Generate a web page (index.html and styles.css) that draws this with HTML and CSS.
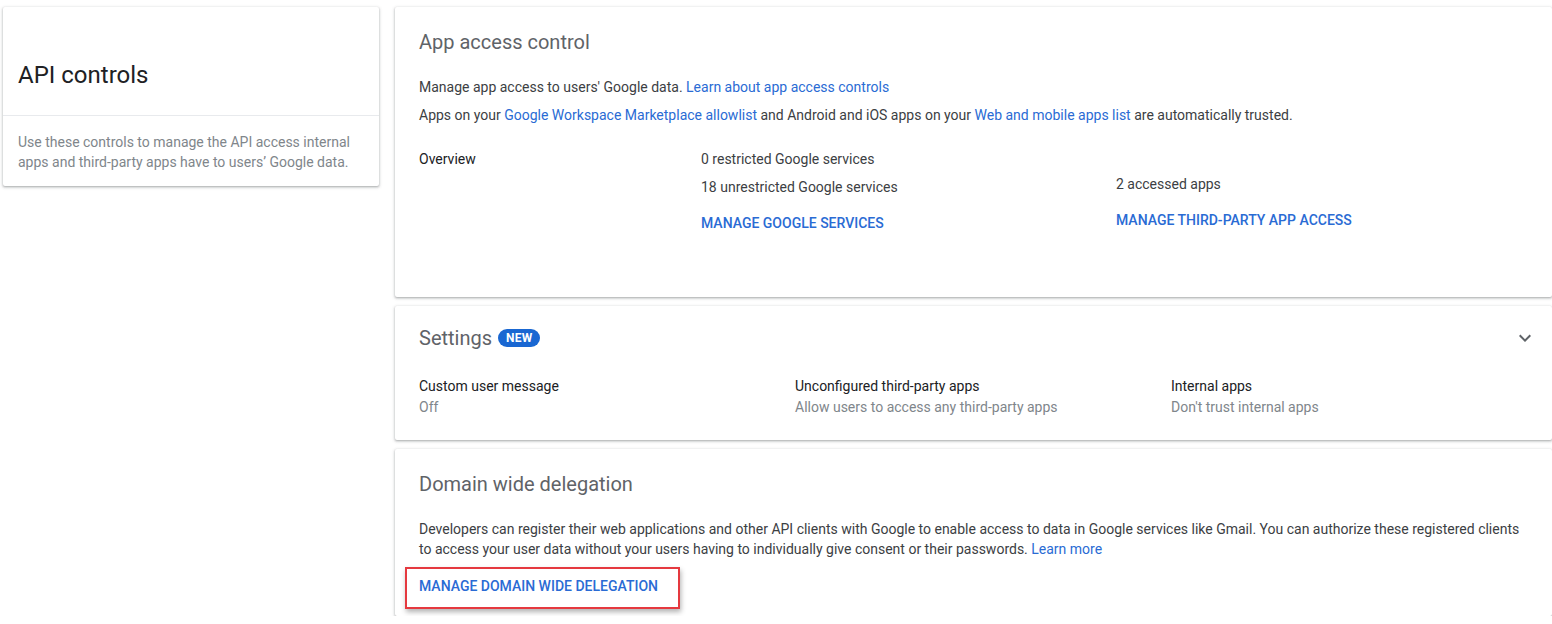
FILE: index.html
```html
<!DOCTYPE html>
<html lang="en">
<head>
<meta charset="utf-8">
<title>API controls</title>
<link rel="stylesheet" href="styles.css">
</head>
<body>
<div class="page">
  <aside class="side">
    <div class="card side-card">
      <div class="side-head">
        <h1 class="side-title">API controls</h1>
      </div>
      <p class="side-desc">Use these controls to manage the API access internal apps and third-party apps have to users’ Google data.</p>
    </div>
  </aside>
  <main class="main">
    <section class="card access">
      <h2 class="card-title">App access control</h2>
      <p class="line">Manage app access to users' Google data. <a class="link" href="#">Learn about app access controls</a></p>
      <p class="line">Apps on your <a class="link" href="#">Google Workspace Marketplace allowlist</a> and Android and iOS apps on your <a class="link" href="#">Web and mobile apps list</a> are automatically trusted.</p>
      <div class="overview">
        <div class="ov-label">Overview</div>
        <div class="ov-col ov-services">
          <div class="ov-line">0 restricted Google services</div>
          <div class="ov-line">18 unrestricted Google services</div>
          <a class="action action-services" href="#">MANAGE GOOGLE SERVICES</a>
        </div>
        <div class="ov-col ov-apps">
          <div class="ov-line">2 accessed apps</div>
          <a class="action action-apps" href="#">MANAGE THIRD-PARTY APP ACCESS</a>
        </div>
      </div>
    </section>

    <section class="card settings">
      <div class="settings-head">
        <h2 class="card-title">Settings</h2>
        <span class="badge">NEW</span>
        <svg class="chevron" width="24" height="24" viewBox="0 0 24 24" aria-hidden="true"><path d="M16.59 8.59L12 13.17 7.41 8.59 6 10l6 6 6-6z"/></svg>
      </div>
      <div class="settings-row">
        <div class="setting">
          <div class="setting-label">Custom user message</div>
          <div class="setting-value">Off</div>
        </div>
        <div class="setting">
          <div class="setting-label">Unconfigured third-party apps</div>
          <div class="setting-value">Allow users to access any third-party apps</div>
        </div>
        <div class="setting">
          <div class="setting-label">Internal apps</div>
          <div class="setting-value">Don't trust internal apps</div>
        </div>
      </div>
    </section>

    <section class="card delegation">
      <h2 class="card-title">Domain wide delegation</h2>
      <p class="para">Developers can register their web applications and other API clients with Google to enable access to data in Google services like Gmail. You can authorize these registered clients to access your user data without your users having to individually give consent or their passwords. <a class="link" href="#">Learn more</a></p>
      <a class="action highlight" href="#">MANAGE DOMAIN WIDE DELEGATION</a>
    </section>
  </main>
</div>
</body>
</html>
```

FILE: styles.css
```css
html, body {
  margin: 0;
  padding: 0;
  background: #ffffff;
  overflow: hidden;
}

body {
  font-family: Roboto, "Liberation Sans", Arial, sans-serif;
  font-size: 14px;
  color: #3c4043;
}

.page {
  display: flex;
  align-items: flex-start;
  gap: 16px;
  padding: 7px 0 0 3px;
  width: 1560px;
}

.card {
  background: #fff;
  border-radius: 2px;
  box-shadow: 0 1px 2px rgba(60, 64, 67, 0.3), 0 1px 3px 1px rgba(60, 64, 67, 0.15);
  box-sizing: border-box;
}

/* Left side card */
.side {
  width: 376px;
  flex: none;
}

.side-card {
  height: 179px;
}

.side-head {
  height: 109px;
  box-sizing: border-box;
  padding: 53px 15px 0;
  border-bottom: 1px solid #e8eaed;
}

.side-title {
  margin: 0;
  font-size: 24px;
  line-height: 30px;
  font-weight: 400;
  color: #202124;
}

.side-desc {
  margin: 0;
  padding: 16px 15px 0;
  font-size: 14px;
  line-height: 20px;
  color: #80868b;
}

/* Main column */
.main {
  width: 1157px;
  flex: none;
  display: flex;
  flex-direction: column;
  gap: 9px;
}

.card-title {
  margin: 0;
  font-size: 20px;
  line-height: 28px;
  font-weight: 400;
  color: #5f6368;
}

.link {
  color: #2a6bd4;
  text-decoration: none;
}

.action {
  display: inline-block;
  font-size: 14px;
  line-height: 20px;
  font-weight: 500;
  color: #2a6bd4;
  text-decoration: none;
}

/* App access control */
.access {
  height: 290px;
  padding: 21px 24px 0;
}

.access .card-title {
  margin-bottom: 17px;
}

.line {
  margin: 0;
  line-height: 28px;
  color: #3c4043;
}

.overview {
  display: flex;
  margin-top: 16px;
}

.ov-label {
  width: 282px;
  line-height: 28px;
  color: #202124;
}

.ov-col {
  display: flex;
  flex-direction: column;
  align-items: flex-start;
}

.ov-services {
  width: 415px;
}

.ov-line {
  line-height: 28px;
  color: #3c4043;
}

.action-services {
  margin-top: 12px;
}

.ov-apps {
  padding-top: 25px;
}

.action-apps {
  margin-top: 12px;
}

/* Settings */
.settings {
  height: 134px;
  padding: 18px 24px 0;
}

.settings-head {
  display: flex;
  align-items: center;
  height: 28px;
}

.badge {
  margin-left: 6px;
  height: 18px;
  padding: 0 8px;
  border-radius: 9px;
  background: #1967d2;
  color: #fff;
  font-size: 12px;
  line-height: 18px;
  font-weight: 700;
  letter-spacing: 0.2px;
}

.chevron {
  margin-left: auto;
  margin-right: -9px;
  fill: #5f6368;
}

.settings-row {
  display: flex;
  margin-top: 24px;
}

.setting {
  width: 376px;
  flex: none;
}

.setting-label {
  line-height: 20px;
  color: #202124;
}

.setting-value {
  line-height: 22px;
  color: #80868b;
}

/* Domain wide delegation */
.delegation {
  height: 167px;
  padding: 21px 24px 0;
}

.para {
  margin: 21px 0 0;
  line-height: 20px;
  color: #3c4043;
}

.highlight {
  margin: 8px 0 0 -14px;
  padding: 7px 20px 11px 12px;
  border: 2px solid #e5393f;
  box-shadow: 1px 3px 5px rgba(0, 0, 0, 0.3);
}
```
